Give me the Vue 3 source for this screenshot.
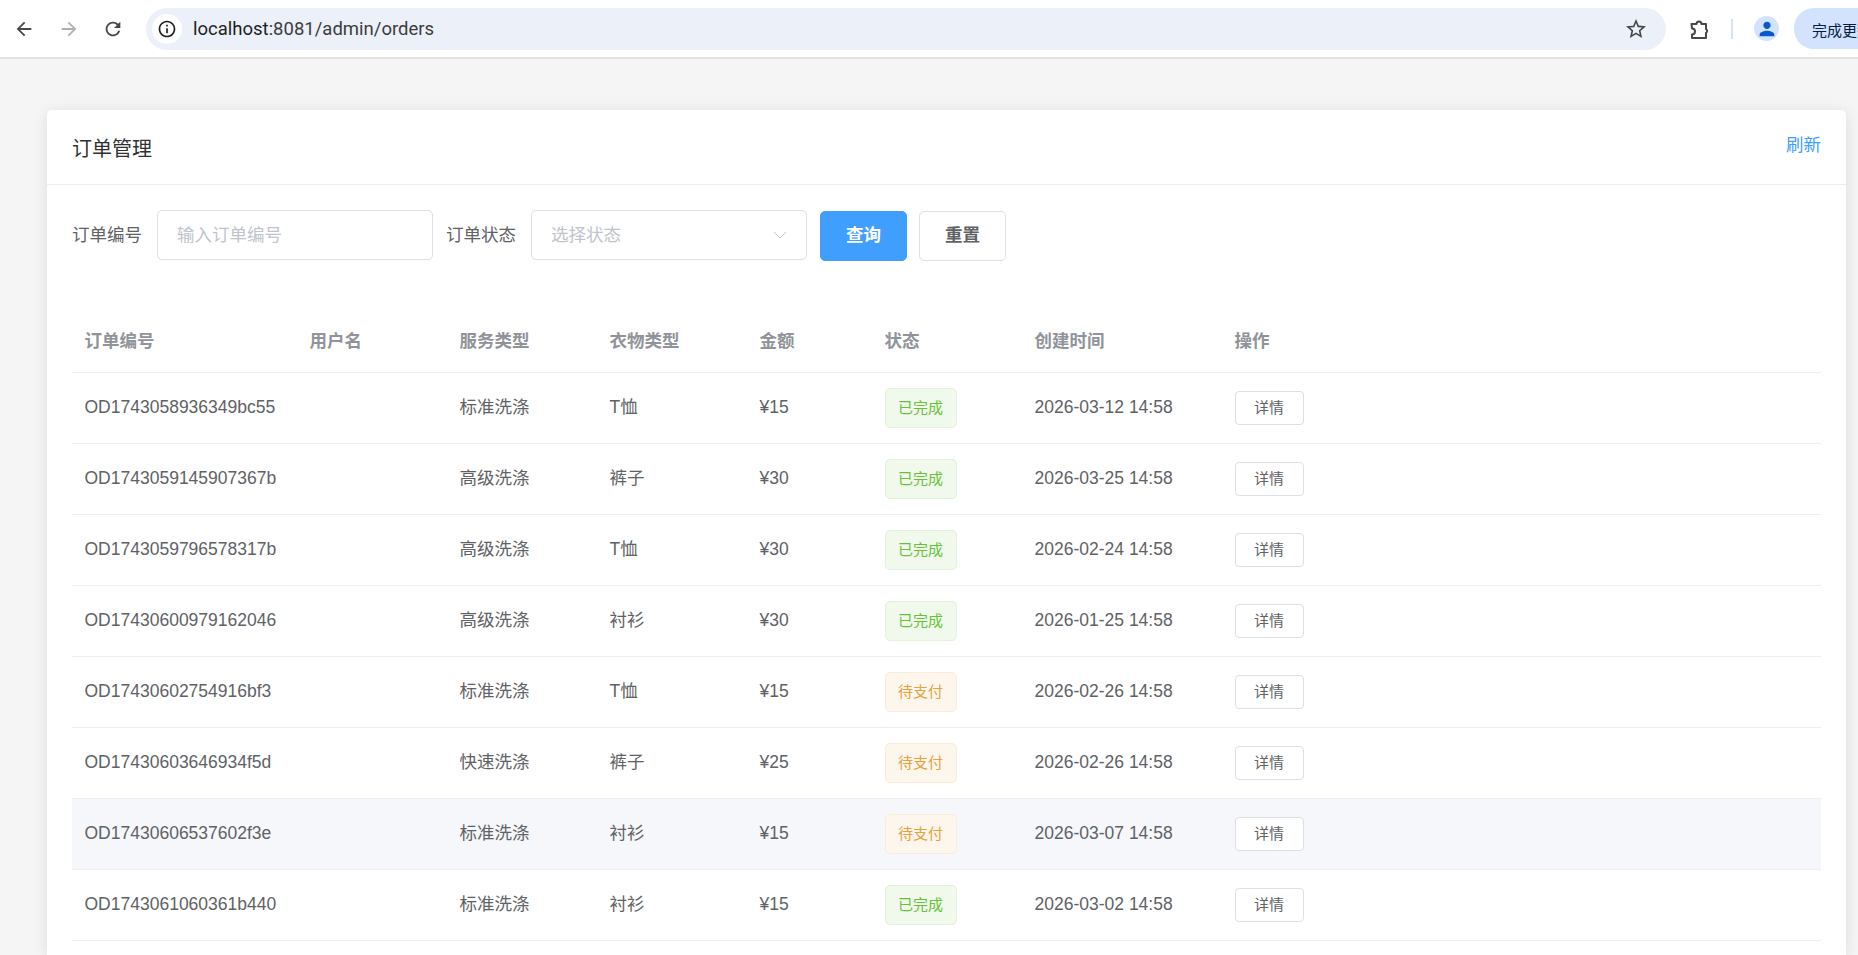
<template>
  <div class="page">
    <div class="toolbar">
      <div class="nav">
        <svg class="nav-icon" viewBox="0 0 24 24" fill="#474747"><path d="M20 11H7.83l5.59-5.59L12 4l-8 8 8 8 1.41-1.41L7.83 13H20v-2z" /></svg>
        <svg class="nav-icon" viewBox="0 0 24 24" fill="#b0b0b0"><path d="M12 4l-1.41 1.41L16.17 11H4v2h12.17l-5.58 5.59L12 20l8-8z" /></svg>
        <svg class="nav-icon" viewBox="0 0 24 24" fill="#474747"><path d="M17.65 6.35C16.2 4.9 14.21 4 12 4c-4.42 0-7.99 3.58-7.99 8s3.57 8 7.99 8c3.73 0 6.84-2.55 7.73-6h-2.08c-.82 2.33-3.04 4-5.65 4-3.31 0-6-2.69-6-6s2.69-6 6-6c1.66 0 3.14.69 4.22 1.78L13 11h7V4l-2.35 2.35z" /></svg>
      </div>
      <div class="address">
        <span class="site-info">
          <svg width="20" height="20" viewBox="0 0 24 24" fill="#1f1f1f"><path d="M11 7h2v2h-2zm0 4h2v6h-2zm1-9C6.48 2 2 6.48 2 12s4.48 10 10 10 10-4.48 10-10S17.52 2 12 2zm0 18c-4.41 0-8-3.59-8-8s3.59-8 8-8 8 3.59 8 8-3.59 8-8 8z" /></svg>
        </span>
        <span class="url"><span class="host">localhost</span>:8081/admin/orders</span>
        <svg class="star" width="24" height="24" viewBox="0 0 24 24" fill="#474747"><path d="M22 9.24l-7.19-.62L12 2 9.19 8.63 2 9.24l5.46 4.73L5.82 21 12 17.27 18.18 21l-1.63-7.03L22 9.24zM12 15.4l-3.76 2.27 1-4.28-3.32-2.88 4.38-.38L12 6.1l1.71 4.04 4.38.38-3.32 2.88 1 4.28L12 15.4z" /></svg>
      </div>
      <svg class="puzzle" width="24" height="24" viewBox="0 0 24 24" fill="none" stroke="#474747" stroke-width="2" stroke-linejoin="round"><path d="M4.5 7H9.5a2.5 2.5 0 0 1 5 0H19V12.2a2 2 0 0 1 0 3.6V21H5V17.5a3 3 0 0 0 0-6Z" /></svg>
      <span class="divider"></span>
      <span class="avatar">
        <svg width="22" height="22" viewBox="0 0 24 24" fill="#0b57d0"><path d="M12 12c2.21 0 4-1.79 4-4s-1.79-4-4-4-4 1.79-4 4 1.79 4 4 4zm0 2c-2.67 0-8 1.34-8 4v2h16v-2c0-2.66-5.33-4-8-4z" /></svg>
      </span>
      <div class="update-pill">完成更新</div>
    </div>

    <div class="content">
      <div class="card">
        <div class="card-header">
          <span class="card-title">订单管理</span>
          <a class="refresh">刷新</a>
        </div>
        <div class="card-body">
          <div class="filter">
            <label class="filter-label">订单编号</label>
            <div class="field order-field"><span class="placeholder">输入订单编号</span></div>
            <label class="filter-label second">订单状态</label>
            <div class="field status-field">
              <span class="placeholder">选择状态</span>
              <svg width="14" height="14" viewBox="0 0 14 14" fill="none" stroke="#c0c4cc" stroke-width="1"><path d="M1 4l6 6 6-6" /></svg>
            </div>
            <button class="btn primary">查询</button>
            <button class="btn">重置</button>
          </div>

          <table class="orders">
            <colgroup>
              <col v-for="w in colWidths" :key="w.key" :style="{ width: w.width }" />
            </colgroup>
            <thead>
              <tr>
                <th v-for="h in headers" :key="h">{{ h }}</th>
              </tr>
            </thead>
            <tbody>
              <tr v-for="o in orders" :key="o.id" :class="{ hover: o.hover }">
                <td>{{ o.id }}</td>
                <td></td>
                <td>{{ o.service }}</td>
                <td>{{ o.cloth }}</td>
                <td>¥{{ o.price }}</td>
                <td><span class="tag" :class="o.done ? 'success' : 'warning'">{{ o.done ? '已完成' : '待支付' }}</span></td>
                <td>{{ o.time }}</td>
                <td><button class="detail">详情</button></td>
              </tr>
            </tbody>
          </table>
        </div>
      </div>
    </div>
  </div>
</template>

<script setup>
const headers = ['订单编号', '用户名', '服务类型', '衣物类型', '金额', '状态', '创建时间', '操作']

const colWidths = [
  { key: 'id', width: '225px' },
  { key: 'user', width: '150px' },
  { key: 'service', width: '150px' },
  { key: 'cloth', width: '150px' },
  { key: 'price', width: '125px' },
  { key: 'status', width: '150px' },
  { key: 'time', width: '200px' },
  { key: 'op', width: 'auto' }
]

const orders = [
  { id: 'OD1743058936349bc55', service: '标准洗涤', cloth: 'T恤', price: 15, done: true, time: '2026-03-12 14:58' },
  { id: 'OD1743059145907367b', service: '高级洗涤', cloth: '裤子', price: 30, done: true, time: '2026-03-25 14:58' },
  { id: 'OD1743059796578317b', service: '高级洗涤', cloth: 'T恤', price: 30, done: true, time: '2026-02-24 14:58' },
  { id: 'OD17430600979162046', service: '高级洗涤', cloth: '衬衫', price: 30, done: true, time: '2026-01-25 14:58' },
  { id: 'OD17430602754916bf3', service: '标准洗涤', cloth: 'T恤', price: 15, done: false, time: '2026-02-26 14:58' },
  { id: 'OD17430603646934f5d', service: '快速洗涤', cloth: '裤子', price: 25, done: false, time: '2026-02-26 14:58' },
  { id: 'OD17430606537602f3e', service: '标准洗涤', cloth: '衬衫', price: 15, done: false, time: '2026-03-07 14:58', hover: true },
  { id: 'OD1743061060361b440', service: '标准洗涤', cloth: '衬衫', price: 15, done: true, time: '2026-03-02 14:58' }
]
</script>

<style>
html, body {
  height: 100%;
  overflow: hidden;
  background: #f5f5f5;
}
</style>

<style scoped>
.page {
  height: 955px;
  display: flex;
  flex-direction: column;
  overflow: hidden;
  font-family: "Liberation Sans", "Noto Sans CJK SC", sans-serif;
}

/* browser chrome */
.toolbar {
  height: 59px;
  flex: none;
  box-sizing: border-box;
  display: flex;
  align-items: center;
  padding: 0 0 0 13px;
  background: #fff;
  border-bottom: 2px solid #e3e3e3;
}
.nav {
  display: flex;
  flex: none;
  gap: 22.5px;
  width: 133px;
}
.nav-icon {
  width: 22px;
  height: 22px;
}
.address {
  width: 1520px;
  height: 42px;
  flex: none;
  display: flex;
  align-items: center;
  padding: 0 18px 0 6px;
  box-sizing: border-box;
  background: #ebf0f9;
  border-radius: 21px;
}
.site-info {
  width: 30px;
  height: 30px;
  border-radius: 50%;
  background: #fff;
  display: flex;
  align-items: center;
  justify-content: center;
}
.url {
  margin-left: 11px;
  flex: 1;
  font-family: "Roboto", "Liberation Sans", sans-serif;
  font-size: 18.5px;
  color: #3c3c3c;
}
.host {
  color: #1f1f1f;
}
.puzzle {
  margin-left: 21px;
  flex: none;
}
.divider {
  width: 2px;
  height: 20px;
  flex: none;
  margin-left: 20px;
  background: #d3e3fd;
}
.avatar {
  width: 25px;
  height: 25px;
  flex: none;
  margin-left: 21px;
  border-radius: 50%;
  background: #d3e3fd;
  display: flex;
  align-items: center;
  justify-content: center;
}
.update-pill {
  width: 64px;
  height: 41px;
  flex: none;
  margin-left: 15px;
  padding-left: 18px;
  box-sizing: border-box;
  background: #d3e3fd;
  border-radius: 20px 0 0 20px;
  font-size: 15px;
  line-height: 43px;
  color: #041e49;
  white-space: nowrap;
  overflow: hidden;
  font-family: "Noto Sans CJK SC", sans-serif;
}

/* page */
.content {
  flex: 1;
  min-height: 0;
  padding: 51px 12px 0 47px;
  display: flex;
}
.card {
  flex: 1;
  background: #fff;
  border-radius: 5px 5px 0 0;
  box-shadow: 0 2px 15px rgba(0, 0, 0, 0.1);
}
.card-header {
  height: 75px;
  box-sizing: border-box;
  padding: 0 25px;
  display: flex;
  justify-content: space-between;
  border-bottom: 1px solid #ebeef5;
}
.card-title {
  font-size: 20px;
  line-height: 78px;
  color: #303133;
}
.refresh {
  font-size: 17.5px;
  line-height: 70px;
  color: #409eff;
}
.card-body {
  padding: 25px;
}

.filter {
  display: flex;
  align-items: flex-start;
}
.filter-label {
  font-size: 17.5px;
  line-height: 50px;
  color: #606266;
  margin-right: 15px;
}
.filter-label.second {
  margin-left: 13px;
}
.field {
  height: 50px;
  box-sizing: border-box;
  border: 1px solid #dcdfe6;
  border-radius: 5px;
  padding: 0 19px 0 18px;
  display: flex;
  align-items: center;
  justify-content: space-between;
}
.order-field {
  width: 276px;
}
.status-field {
  width: 276px;
}
.placeholder {
  font-size: 17.5px;
  line-height: 46px;
  color: #c0c4cc;
  margin-left: 1px;
}
.btn {
  width: 87px;
  height: 50px;
  margin: 1px 0 0 13px;
  padding: 0 0 2px;
  background: #fff;
  border: 1px solid #dcdfe6;
  border-radius: 5px;
  font-family: inherit;
  font-size: 17.5px;
  line-height: 23px;
  font-weight: 700;
  color: #606266;
}
.btn + .btn {
  margin-left: 12px;
}
.btn.primary {
  background: #409eff;
  border-color: #409eff;
  color: #fff;
}

.orders {
  width: 100%;
  margin-top: 51px;
  table-layout: fixed;
  border-collapse: collapse;
}
.orders th,
.orders td {
  box-sizing: border-box;
  padding: 0 12.5px;
  text-align: left;
  font-size: 17.5px;
  line-height: 23px;
  border-bottom: 1px solid #ebeef5;
  white-space: nowrap;
}
.orders th {
  height: 60px;
  color: #909399;
  font-weight: 700;
}
.orders td {
  height: 71px;
  color: #606266;
}
.orders tr.hover td {
  background: #f5f7fa;
}
.tag {
  display: inline-block;
  height: 40px;
  padding: 0 12.5px;
  box-sizing: border-box;
  border: 1px solid;
  border-radius: 5px;
  font-size: 15px;
  line-height: 38px;
  vertical-align: middle;
}
.tag.success {
  background: #f0f9eb;
  border-color: #e1f3d8;
  color: #67c23a;
}
.tag.warning {
  background: #fdf6ec;
  border-color: #faecd8;
  color: #e6a23c;
}
.detail {
  width: 69px;
  height: 34px;
  margin-top: 1px;
  padding: 0;
  background: #fff;
  border: 1px solid #dcdfe6;
  border-radius: 4px;
  font-family: inherit;
  font-size: 15px;
  line-height: 20px;
  color: #606266;
  vertical-align: middle;
}
</style>
